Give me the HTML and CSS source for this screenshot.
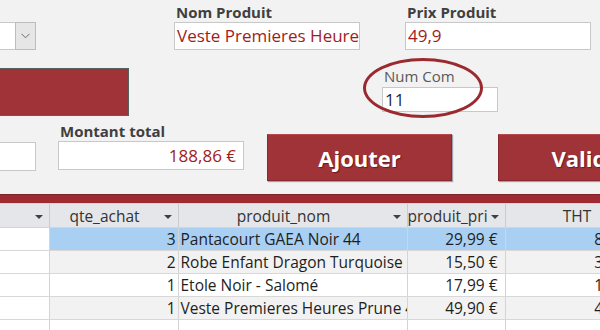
FILE: index.html
```html
<!DOCTYPE html>
<html lang="fr">
<head>
    <meta charset="UTF-8">
    <title>Commande</title>
    <link rel="stylesheet" href="styles.css">
</head>
<body>
    <!-- Form area -->
    <div class="form">
        <div class="row row-a">
            <div class="combo">
                <div class="combo-text"></div>
                <div class="combo-btn">
                    <svg width="9" height="6" viewBox="0 0 9 6"><path d="M0.5 0.8 L4.5 4.8 L8.5 0.8" fill="none" stroke="#6b6b6b" stroke-width="1"/></svg>
                </div>
            </div>
            <div class="field field-nom">
                <label class="label">Nom Produit</label>
                <div class="box red">Veste Premieres Heures Prune 44</div>
            </div>
            <div class="field field-prix">
                <label class="label">Prix Produit</label>
                <div class="box red">49,9</div>
            </div>
        </div>

        <div class="row row-b">
            <div class="red-block"></div>
            <div class="field field-num">
                <label class="label light">Num Com</label>
                <div class="box small navy">11</div>
            </div>
        </div>

        <div class="row row-c">
            <div class="box stub"></div>
            <div class="field field-total">
                <label class="label">Montant total</label>
                <div class="box red right">188,86 €</div>
            </div>
            <button class="btn btn-add">Ajouter</button>
            <button class="btn btn-ok">Valider</button>
        </div>

        <!-- highlight around Num Com -->
        <div class="circle"></div>
    </div>

    <div class="bar"></div>

    <!-- Datasheet -->
    <table class="sheet">
        <colgroup>
            <col class="c1"><col class="c2"><col class="c3"><col class="c4"><col class="c5">
        </colgroup>
        <thead>
            <tr>
                <th><span class="hd"><span class="hd-text"></span><span class="arrow"></span></span></th>
                <th><span class="hd"><span class="hd-text">qte_achat</span><span class="arrow"></span></span></th>
                <th><span class="hd"><span class="hd-text">produit_nom</span><span class="arrow"></span></span></th>
                <th><span class="hd"><span class="hd-text">produit_prix</span><span class="arrow"></span></span></th>
                <th><span class="hd"><span class="hd-text">THT</span></span></th>
            </tr>
        </thead>
        <tbody>
            <tr class="selected">
                <td class="first"></td>
                <td class="num">3</td>
                <td class="txt">Pantacourt GAEA Noir 44</td>
                <td class="price">29,99 €</td>
                <td class="tht">89,97 €</td>
            </tr>
            <tr class="alt">
                <td class="first"></td>
                <td class="num">2</td>
                <td class="txt">Robe Enfant Dragon Turquoise</td>
                <td class="price">15,50 €</td>
                <td class="tht">31,00 €</td>
            </tr>
            <tr>
                <td class="first"></td>
                <td class="num">1</td>
                <td class="txt">Etole Noir - Salomé</td>
                <td class="price">17,99 €</td>
                <td class="tht">17,99 €</td>
            </tr>
            <tr class="alt">
                <td class="first"></td>
                <td class="num">1</td>
                <td class="txt">Veste Premieres Heures Prune 44</td>
                <td class="price">49,90 €</td>
                <td class="tht">49,90 €</td>
            </tr>
            <tr>
                <td class="first"></td>
                <td class="num"></td>
                <td class="txt"></td>
                <td class="price"></td>
                <td class="tht"></td>
            </tr>
        </tbody>
    </table>
</body>
</html>
```

FILE: styles.css
```css
/* General */
body {
    margin: 0;
    padding: 0;
    width: 600px;
    height: 330px;
    overflow: hidden;
    background-color: #ffffff;
    font-family: "Open Sans", "Noto Sans", sans-serif;
    color: #222;
}

/* Form area */
.form {
    position: relative;
    height: 194px;
    background-color: #f2f2f2;
    overflow: hidden;
}

.row {
    display: flex;
}

.row > * {
    flex-shrink: 0;
}

.row-a {
    height: 52px;
    align-items: flex-end;
}

.row-b {
    height: 68px;
    align-items: flex-start;
}

.row-c {
    height: 74px;
    align-items: flex-start;
}

.field {
    display: flex;
    flex-direction: column;
}

.label {
    height: 20px;
    line-height: 20px;
    font-size: 15px;
    font-weight: bold;
    color: #3f3f3f;
    padding-left: 2px;
}

.label.light {
    font-weight: normal;
    color: #595959;
}

.box {
    box-sizing: border-box;
    height: 28px;
    background-color: #fff;
    border: 1px solid #c8c8c8;
    padding: 0 2px;
    font-size: 17px;
    line-height: 26px;
    white-space: nowrap;
    overflow: hidden;
}

.box.red {
    color: #a11c22;
}

.box.navy {
    color: #1f2a44;
}

.box.right {
    text-align: right;
    padding-right: 7px;
}

.box.small {
    height: 25px;
    line-height: 23px;
}

/* Combo on the left */
.combo {
    display: flex;
    width: 36px;
    height: 28px;
    margin-bottom: 2px;
}

.combo-text {
    width: 15px;
    background-color: #fff;
    border-top: 1px solid #c8c8c8;
    border-bottom: 1px solid #c8c8c8;
}

.combo-btn {
    box-sizing: border-box;
    width: 21px;
    display: flex;
    align-items: center;
    justify-content: center;
    background-color: #e6e6e6;
    border: 1px solid #bdbdbd;
}

.field-nom {
    margin-left: 138px;
    width: 186px;
    margin-bottom: 2px;
}

.field-prix {
    margin-left: 45px;
    width: 186px;
    margin-bottom: 2px;
}

.red-block {
    box-sizing: border-box;
    width: 129px;
    height: 48px;
    margin-top: 16px;
    background-color: #9f3337;
    border: 1px solid #55605f;
    border-left: none;
}

.field-num {
    margin-left: 253px;
    margin-top: 14px;
    width: 116px;
}

.field-num .box {
    margin-top: 1px;
}

.stub {
    width: 46px;
    height: 29px;
    margin-left: -10px;
    margin-top: 22px;
}

.field-total {
    margin-left: 22px;
    margin-top: 1px;
    width: 186px;
}

.field-total .box {
    height: 29px;
    line-height: 27px;
}

/* Buttons */
.btn {
    width: 185px;
    height: 47px;
    margin-top: 14px;
    background-color: #9f3337;
    border: 1px solid #8a2a2e;
    border-top-color: #b44a4e;
    box-shadow: 1px 1px 1px rgba(60, 60, 90, 0.45);
    color: #fff;
    font-family: "Open Sans", "Noto Sans", sans-serif;
    font-weight: bold;
    font-size: 22px;
    text-shadow: 1px 1px 1px rgba(60, 0, 0, 0.5);
    padding: 0;
}

.btn-add {
    margin-left: 23px;
}

.btn-ok {
    margin-left: 46px;
}

.circle {
    position: absolute;
    left: 363px;
    top: 58px;
    width: 114px;
    height: 54px;
    border: 3px solid #9b2a30;
    border-radius: 50%;
}

/* Red separator */
.bar {
    height: 8px;
    background-color: #9e2b31;
    border-top: 1px solid #7d2227;
    border-bottom: 1px solid #d6d6d6;
}

/* Datasheet */
.sheet {
    table-layout: fixed;
    width: 649px;
    border-collapse: collapse;
    font-size: 15.5px;
}

.c1 { width: 49px; }
.c2 { width: 129px; }
.c3 { width: 229px; }
.c4 { width: 98px; }
.c5 { width: 144px; }

.sheet th {
    height: 23px;
    padding: 0;
    background-color: #e4e6ea;
    border-right: 1px solid #c9cbcf;
    border-bottom: 1px solid #d4d4d4;
    font-weight: normal;
    color: #333;
    font-size: 15.5px;
}

.hd {
    display: flex;
    align-items: center;
}

.hd-text {
    flex: 1;
    min-width: 0;
    overflow: hidden;
    white-space: nowrap;
    text-align: center;
}

.arrow {
    flex-shrink: 0;
    width: 0;
    height: 0;
    margin: 2px 6px 0 4px;
    border-left: 4px solid transparent;
    border-right: 4px solid transparent;
    border-top: 4px solid #404040;
}

.sheet td {
    height: 22px;
    padding: 0 2px;
    border-right: 1px solid #d4d4d4;
    border-bottom: 1px solid #d8d8d8;
    white-space: nowrap;
    overflow: hidden;
    color: #1e1e1e;
}

.sheet tr.alt td {
    background-color: #f2f2f2;
}

.sheet tr.selected td {
    background-color: #a9d0f3;
}

.sheet tr td.first {
    background-color: #fff;
}

.num {
    text-align: right;
}

.price {
    text-align: right;
    padding-right: 7px !important;
}

.tht {
    text-align: right;
}
```
